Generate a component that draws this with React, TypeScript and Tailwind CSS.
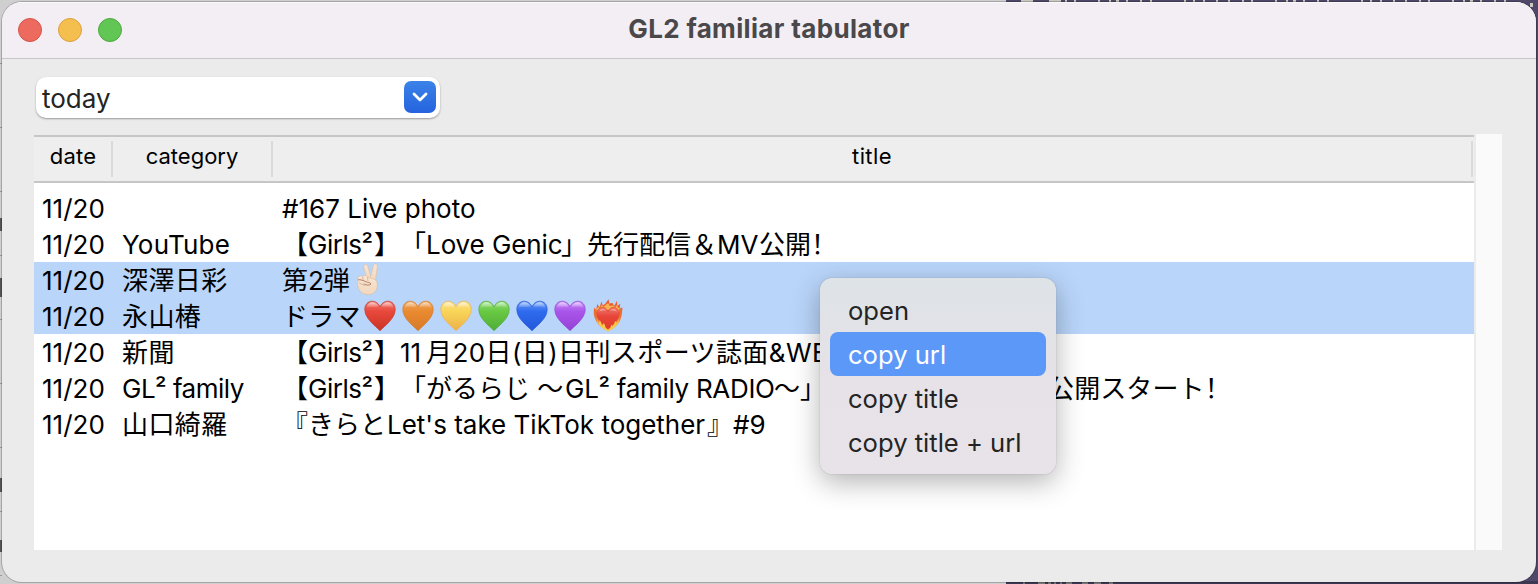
import React from "react";

type Seg = { t?: string; w?: string; node?: React.ReactNode };

function Heart({ id, top, mid, low }: { id: string; top: string; mid: string; low: string }) {
  return (
    <svg viewBox="0 0 38 36" className="h-[36px] w-[38px] shrink-0">
      <defs>
        <linearGradient id={id} x1="0" y1="0" x2="0" y2="1">
          <stop offset="0" stopColor={top} />
          <stop offset="0.35" stopColor={mid} />
          <stop offset="1" stopColor={low} />
        </linearGradient>
        <linearGradient id={id + "g"} x1="0" y1="0" x2="0" y2="1">
          <stop offset="0" stopColor="#fff" stopOpacity="0.65" />
          <stop offset="1" stopColor="#fff" stopOpacity="0" />
        </linearGradient>
      </defs>
      <path d="M19 32.7C14 27.5 3.8 20.5 3.8 11.4C3.8 6.6 7 3.2 11.2 3.2C14.6 3.2 17.6 5.3 19 8.8C20.4 5.3 23.4 3.2 26.8 3.2C31 3.2 34.2 6.6 34.2 11.4C34.2 20.5 24 27.5 19 32.7Z" fill={`url(#${id})`} stroke={low} strokeWidth="0.7" />
      <path d="M5.6 10C6 6.6 8.4 4.2 11.3 4.2C14.2 4.2 16.6 5.8 17.8 8.6C15 9.6 10 8.3 5.6 10ZM20.2 8.6C21.4 5.8 23.8 4.2 26.7 4.2C29.6 4.2 32 6.6 32.4 10C28 8.3 23 9.6 20.2 8.6Z" fill={`url(#${id}g)`} />
    </svg>
  );
}

function FireHeart() {
  return (
    <svg viewBox="0 0 38 36" className="h-[36px] w-[38px] shrink-0">
      <defs>
        <linearGradient id="flame" x1="0" y1="0" x2="0" y2="1">
          <stop offset="0" stopColor="#e9582c" />
          <stop offset="0.6" stopColor="#ee7434" />
          <stop offset="1" stopColor="#f9c94a" />
        </linearGradient>
        <linearGradient id="core" x1="0" y1="0" x2="0" y2="1">
          <stop offset="0" stopColor="#f0776a" />
          <stop offset="0.4" stopColor="#e8453a" />
          <stop offset="1" stopColor="#dd3a28" />
        </linearGradient>
      </defs>
      <path d="M19 32.5C11 30 6.5 24 5.2 18C4.5 15 4.8 12.5 5.2 9.5L7.2 12L8.2 6L10.5 9.5L12.5 3.5L13.8 7.5L16.5 5.5L19.5 1.3L20.3 5.5L23.5 5L25.2 8L28 2.8L28.3 8L31.2 5.8L30.8 10.5L33.5 9.5C33 13 33.2 16 32 20C30 26 26 30.5 19 32.5Z" fill="url(#flame)" />
      <path d="M7.5 11.5L9 9L11 10.5L12.6 7L14.4 9L19 5L21 8L24 7.5L26 9.5L28 7L29 10L30.5 9.5L30 14L19 12L8 15Z" fill="#f6b552" />
      <path d="M19 32C15.5 27.5 8 22.6 8 15.6C8 11.6 10.6 9.4 13.6 9.4C16.2 9.4 18.2 11 19 13.6C19.8 11 21.8 9.4 24.4 9.4C27.4 9.4 30 11.6 30 15.6C30 22.6 22.5 27.5 19 32Z" fill="url(#core)" stroke="#d9402c" strokeWidth="0.6" />
      <path d="M10 13.6Q11 10.8 13.6 10.8Q15.6 10.8 16.8 12.6Q13.4 12.2 10 13.6ZM21.2 12.6Q22.4 10.8 24.4 10.8Q27 10.8 28 13.6Q24.6 12.2 21.2 12.6Z" fill="#ffc3bb" opacity="0.55" />
      <path d="M7.4 20Q9 22.6 9.4 25Q10.8 23.6 10.8 22Q12.8 25 12.6 28Q14.2 27 14.8 25Q16.6 27.6 16.6 29.8L19 31.6L21.4 29.8Q22.2 28 22.2 26.4Q23.4 27.2 23.4 28.4Q26 26 26 23Q27.6 24 27.4 25.4Q30 22.5 30.6 19.5Q30 28.4 19 33.4Q9 29 7.4 20Z" fill="#f7c84b" />
    </svg>
  );
}

function Victory() {
  return (
    <svg viewBox="0 0 38 36" className="h-[36px] w-[38px] shrink-0">
      <defs>
        <linearGradient id="skin" x1="0" y1="0" x2="0" y2="1">
          <stop offset="0" stopColor="#f8e6d3" />
          <stop offset="1" stopColor="#f1d7be" />
        </linearGradient>
      </defs>
      <g fill="url(#skin)" stroke="#dcbba0" strokeWidth="0.6" strokeLinejoin="round">
        <path d="M16.6 17L13.8 5C13.3 2.6 17 1.6 17.7 4L21.4 16.5Z" />
        <path d="M20 16.5L23.5 3.3C24.2 1 27.7 1.8 27.4 4.2L25.4 19Z" />
        <path d="M8 15.5C9 13.6 11.5 13.5 12.8 14.6C14 12.8 16.5 13 17.5 15L25 17.5C27.4 19.5 27.8 22 27 25.5C25.8 30.5 22.5 32.6 18.5 32.6C13.5 32.6 10 30.3 8.6 26.5C7.4 23 7 18 8 15.5Z" />
      </g>
      <path d="M8.3 17.8C10.5 17.4 13.5 18.4 16 19.8C17.8 20.8 20 20 21 22C19.5 23.6 16.5 23.5 14 22" fill="none" stroke="#b78368" strokeWidth="1" strokeLinecap="round" />
      <path d="M12.7 14.8L13.2 17.8M17.5 15.2L18 19M9 20.5Q12 23 15 23.4" fill="none" stroke="#d5a98b" strokeWidth="0.8" />
    </svg>
  );
}

const rows: { date: string; cat: string; catClass?: string; title: Seg[]; sel?: boolean }[] = [
  { date: "11/20", cat: "", title: [{ t: "#167 Live photo" }] },
  {
    date: "11/20",
    cat: "YouTube",
    catClass: "tracking-[0.2px]",
    title: [
      { t: "【" },
      { t: "Girls²", w: "w-[66px] tracking-[-0.5px]" },
      { t: "】「" },
      { t: "Love Genic", w: "w-[135px] tracking-[-0.1px]" },
      { t: "」先行配信＆" },
      { t: "MV", w: "w-[42px]" },
      { t: "公開" },
      { t: "！", w: "[font-feature-settings:'halt']" },
    ],
  },
  { date: "11/20", cat: "深澤日彩", catClass: "tracking-[0.4px]", sel: true, title: [{ t: "第2弾", w: "w-[68px]" }, { node: <Victory /> }] },
  {
    date: "11/20",
    cat: "永山椿",
    catClass: "tracking-[0.4px]",
    sel: true,
    title: [
      { t: "ドラマ", w: "w-[78.5px] tracking-[0.2px]" },
      { node: <Heart id="red" top="#f07a70" mid="#e8483c" low="#c93425" /> },
      { node: <Heart id="orange" top="#f0a55a" mid="#ea8a30" low="#d57a28" /> },
      { node: <Heart id="yellow" top="#fbe08a" mid="#f8d558" low="#eeb04a" /> },
      { node: <Heart id="green" top="#90dc78" mid="#68c942" low="#50ac38" /> },
      { node: <Heart id="blue" top="#6a9af6" mid="#2e6bee" low="#2458d8" /> },
      { node: <Heart id="purple" top="#c58af5" mid="#aa55ea" low="#9542d6" /> },
      { node: <FireHeart /> },
    ],
  },
  {
    date: "11/20",
    cat: "新聞",
    catClass: "tracking-[0.4px]",
    title: [
      { t: "【" },
      { t: "Girls²", w: "w-[66px] tracking-[-0.5px]" },
      { t: "】" },
      { t: "11", w: "w-[26px] tracking-[-0.2px]" },
      { t: "月20日(日)日刊スポーツ誌面&WE", w: "tracking-[0.4px]" },
    ],
  },
  {
    date: "11/20",
    cat: "GL² family",
    catClass: "tracking-[-0.5px]",
    title: [
      { t: "【" },
      { t: "Girls²", w: "w-[66px] tracking-[-0.5px]" },
      { t: "】「" },
      { t: "がるらじ" },
      { t: " 〜", w: "w-[35px]" },
      { t: "GL² family RADIO", w: "w-[209px] tracking-[-0.3px]" },
      { t: "〜」" },
      { w: "w-[222px]" },
      { t: "公開スタート", w: "tracking-[0.1px]" },
      { t: "！", w: "[font-feature-settings:'halt']" },
    ],
  },
  {
    date: "11/20",
    cat: "山口綺羅",
    catClass: "tracking-[0.4px]",
    title: [{ t: "『きらと", w: "w-[105px]" }, { t: "Let's take TikTok together", w: "w-[320px]" }, { t: "』" }, { t: "#9" }],
  },
];

function Backdrop() {
  return (
    <svg viewBox="0 0 1538 584" className="absolute inset-0 h-[584px] w-[1538px]">
      <rect width="1538" height="584" fill="#cfcfcf" />
      <path d="M0 63.5H2M0 127.5H2M0 191.5H2M0 255.5H2M0 319.5H2M0 383.5H2M0 447.5H2M0 511.5H2M0 575.5H2" stroke="#9a9a9c" />
      <path d="M1 218V231M1 278V297M1 478V492M1 540V552" stroke="#555" strokeWidth="2" />
      <rect x="1006" width="532" height="584" fill="#4f4869" />
      <rect x="1006" y="581" width="532" height="3" fill="#3d3852" />
      <path d="M1021 1H1033M1049 1H1061" stroke="#c9c9c0" strokeWidth="2" />
      <path d="M1065 1H1528" stroke="#c9c9c0" strokeWidth="2" strokeDasharray="2 7 2 22 2 9 2 5 3 7 2 12 2 8 2 32 2 7 2 8 2 11 2 10 2 12" />
      <rect x="1530" y="3" width="3" height="4" fill="#c9c9c0" />
      <path d="M1023 583H1025M1038 583H1045M1048 583H1051M1054 583H1056M1060 583H1062M1066 583H1072M1082 583H1088M1094 583H1101M1109 583H1113" stroke="#8d8d86" strokeWidth="1.5" />
    </svg>
  );
}

export default function App() {
  return (
    <div className="relative flex h-[584px] w-[1538px] overflow-hidden p-[2px] font-['Inter','Noto_Sans_CJK_JP',sans-serif] text-[26px] text-black [text-spacing-trim:space-all]">
      <Backdrop />
      <div className="relative flex h-[580px] w-[1534px] flex-col overflow-hidden rounded-[20px] bg-[#ebebeb] shadow-[0_0_0_1px_rgba(0,0,0,0.2)]">
        <header className="flex h-[57px] shrink-0 items-center border-b border-[#c8c4c9] bg-[#f3eef4] px-4 shadow-[inset_0_1px_0_#fbf9fb]">
          <div className="flex w-[200px] gap-4">
            <i className="size-6 rounded-full border border-[#d5524a] bg-[#ed6a5f]" />
            <i className="size-6 rounded-full border border-[#d9a13c] bg-[#f5bf4f]" />
            <i className="size-6 rounded-full border border-[#4fa73f] bg-[#62c655]" />
          </div>
          <h1 className="flex-1 pb-[3px] text-center text-[26px] font-bold tracking-[0.35px] text-[#4a484b]">GL2 familiar tabulator</h1>
          <div className="w-[200px]" />
        </header>
        <main className="flex flex-1 flex-col px-8 pt-[18px]">
          <div className="ml-[2px] flex h-[41px] w-[404px] items-center justify-between rounded-[10px] bg-white pr-1 pb-px pl-[6px] shadow-[0_1px_2px_#999]">
            <span className="pt-[3px] text-[#242424]">today</span>
            <span className="flex size-8 items-center justify-center rounded-[7px] bg-linear-to-b from-[#3b82e8] to-[#2563de]">
              <svg viewBox="0 0 16 10" className="h-[10px] w-[16px]">
                <path d="M2 2L8 8L14 2" fill="none" stroke="#fff" strokeWidth="2.8" strokeLinecap="round" strokeLinejoin="round" />
              </svg>
            </span>
          </div>
          <div className="mt-[16px] flex h-[416px]">
            <div className="mt-px flex w-[1440px] flex-col bg-white">
              <div className="flex h-12 items-center border-y-2 border-[#c6c6c6] bg-[#eeeeee] text-center text-[22px] leading-[31px]">
                <div className="h-9 w-[79px] border-r-2 border-[#dadada] pl-px tracking-[0.2px]">date</div>
                <div className="h-9 w-[160px] border-r-2 border-[#dadada]">category</div>
                <div className="h-9 w-[1200px] border-r-2 border-[#dadada] tracking-[0.4px]">title</div>
              </div>
              <div className="mt-[7px]">
                {rows.map((r, i) => (
                  <div key={i} className={r.sel ? "flex h-9 bg-[#b9d5fa] pl-2 leading-[38px]" : "flex h-9 pl-2 leading-[38px]"}>
                    <span className="w-20">{r.date}</span>
                    <span className="w-40 whitespace-nowrap">
                      <span className={r.catClass ?? ""}>{r.cat}</span>
                    </span>
                    <span className="flex h-9 whitespace-pre">
                      {r.title.map((s, j) =>
                        s.node ? (
                          <React.Fragment key={j}>{s.node}</React.Fragment>
                        ) : (
                          <span key={j} className={s.w ? "shrink-0 " + s.w : "shrink-0"}>
                            {s.t}
                          </span>
                        )
                      )}
                    </span>
                  </div>
                ))}
              </div>
            </div>
            <div className="ml-[2px] w-[26px] bg-[#fafafa]" />
          </div>
        </main>
      </div>
      <div className="absolute top-[278px] left-[820px] flex h-[196px] w-[236px] flex-col rounded-xl bg-[linear-gradient(180deg,#dde3e7,#e6e2e7_50%,#e8e3e8)] px-[10px] py-[10px] text-[25.6px] text-[#242424] shadow-[0_0_1px_#777,0_8px_28px_rgba(0,0,0,0.3)]">
        <div className="flex h-11 items-center pt-[3px] pl-[18px]">open</div>
        <div className="flex h-11 items-center rounded-lg bg-[#5c98f8] pt-[2px] pl-[18px] text-white">copy url</div>
        <div className="flex h-11 items-center pt-[3px] pl-[18px]">copy title</div>
        <div className="flex h-11 items-center pt-[3px] pl-[18px]">copy title + url</div>
      </div>
    </div>
  );
}
